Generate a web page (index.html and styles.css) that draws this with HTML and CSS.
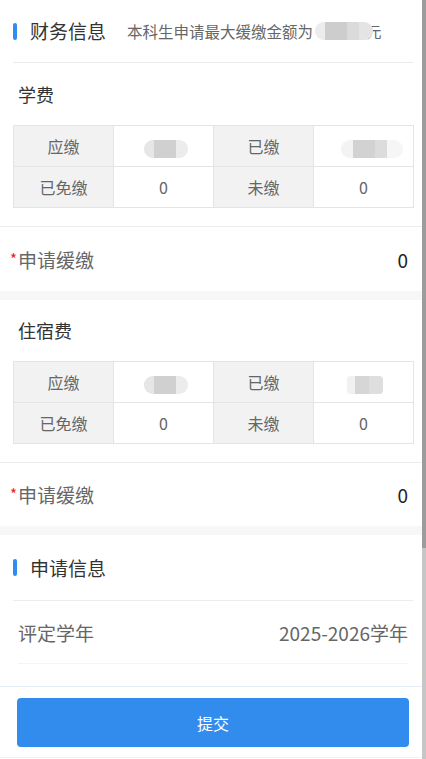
FILE: index.html
```html
<!DOCTYPE html>
<html lang="zh-CN">
<head>
    <meta charset="UTF-8">
    <meta name="viewport" content="width=device-width, initial-scale=1.0">
    <title>缓缴申请</title>
    <link rel="stylesheet" href="styles.css">
</head>
<body>

<div class="page">
    <section class="card">
        <div class="card-head">
            <span class="bar"></span>
            <span class="head-title">财务信息</span>
            <span class="head-note">本科生申请最大缓缴金额为<span class="mosaic mosaic-note"><i></i><i></i><i></i><i></i></span><span class="unit">元</span></span>
        </div>

        <div class="fee">
            <div class="fee-title">学费</div>
            <table class="fee-table">
                <tr>
                    <td class="cell-label">应缴</td>
                    <td><span class="mosaic mosaic-a"><i></i><i></i><i></i></span></td>
                    <td class="cell-label">已缴</td>
                    <td><span class="mosaic mosaic-b"><i></i><i></i><i></i></span></td>
                </tr>
                <tr>
                    <td class="cell-label">已免缴</td>
                    <td>0</td>
                    <td class="cell-label">未缴</td>
                    <td>0</td>
                </tr>
            </table>
        </div>
        <div class="field">
            <span class="req">*</span>
            <span class="field-label">申请缓缴</span>
            <span class="field-value">0</span>
        </div>
    </section>

    <div class="gap"></div>

    <section class="card">
        <div class="fee">
            <div class="fee-title fee-title-alt">住宿费</div>
            <table class="fee-table">
                <tr>
                    <td class="cell-label">应缴</td>
                    <td><span class="mosaic mosaic-a"><i></i><i></i><i></i></span></td>
                    <td class="cell-label">已缴</td>
                    <td><span class="mosaic mosaic-c"><i></i><i></i><i></i></span></td>
                </tr>
                <tr>
                    <td class="cell-label">已免缴</td>
                    <td>0</td>
                    <td class="cell-label">未缴</td>
                    <td>0</td>
                </tr>
            </table>
        </div>
        <div class="field field-alt">
            <span class="req">*</span>
            <span class="field-label">申请缓缴</span>
            <span class="field-value">0</span>
        </div>
    </section>

    <div class="gap"></div>

    <section class="card">
        <div class="card-head card-head-alt">
            <span class="bar"></span>
            <span class="head-title">申请信息</span>
        </div>
        <div class="info-row">
            <span class="info-label">评定学年</span>
            <span class="info-value">2025-2026学年</span>
        </div>
        <div class="spacer"></div>
    </section>

    <div class="footer">
        <button class="submit">提交</button>
    </div>
</div>

<div class="scrollbar"><div class="thumb"></div></div>

</body>
</html>
```

FILE: styles.css
```css
body {
    font-family: "Noto Sans CJK SC", "Noto Sans", sans-serif;
    background-color: #fff;
    color: #333;
    margin: 0;
    overflow: hidden;
}
.page {
    width: 422px;
    background-color: #fff;
}
.card {
    background-color: #fff;
}
.card-head {
    display: flex;
    align-items: center;
    height: 62px;
    margin: 0 9px 0 13px;
    border-bottom: 1px solid #ececec;
}
.card-head-alt {
    height: 65px;
}
.bar {
    width: 4px;
    height: 17px;
    border-radius: 2px;
    background-color: #2f8cf0;
    margin-right: 13px;
}
.head-title {
    font-size: 19px;
    line-height: 24px;
    color: #333;
    margin-right: 21px;
}
.head-note {
    display: flex;
    align-items: center;
    font-size: 15.5px;
    line-height: 20px;
    color: #666;
    white-space: nowrap;
}
.unit {
    margin-left: -7px;
}
.mosaic {
    display: inline-flex;
    position: relative;
    z-index: 1;
    height: 18px;
    border-radius: 9px;
    overflow: hidden;
    background-color: #f1f1f1;
}
.mosaic i {
    display: block;
    height: 100%;
}
.mosaic-note {
    width: 58px;
    margin-left: 2px;
}
.mosaic-note i:nth-child(1) { width: 10px; background-color: #ececec; }
.mosaic-note i:nth-child(2) { width: 22px; background-color: #cdcdcd; }
.mosaic-note i:nth-child(3) { width: 12px; background-color: #dadada; }
.mosaic-note i:nth-child(4) { width: 14px; background-color: #e4e4e4; }
.mosaic-a {
    width: 44px;
    margin-left: 4px;
    vertical-align: middle;
}
.mosaic-a i:nth-child(1) { width: 10px; background-color: #e6e6e6; }
.mosaic-a i:nth-child(2) { width: 22px; background-color: #d0d0d0; }
.mosaic-a i:nth-child(3) { width: 12px; background-color: #ececec; }
.mosaic-b {
    width: 62px;
    margin-left: 16px;
    vertical-align: middle;
    background-color: #f6f6f6;
}
.mosaic-b i:nth-child(1) { width: 12px; background-color: #f3f3f3; }
.mosaic-b i:nth-child(2) { width: 22px; background-color: #d2d2d2; }
.mosaic-b i:nth-child(3) { width: 12px; background-color: #dcdcdc; }
.mosaic-c {
    width: 36px;
    margin-left: 2px;
    vertical-align: middle;
    border-radius: 4px;
    background-color: #f3f3f3;
}
.mosaic-c i:nth-child(1) { width: 8px; background-color: #f1f1f1; }
.mosaic-c i:nth-child(2) { width: 14px; background-color: #d6d6d6; }
.mosaic-c i:nth-child(3) { width: 14px; background-color: #dedede; }

.fee {
    padding-bottom: 18px;
    border-bottom: 1px solid #ececec;
}
.fee-title {
    height: 62px;
    line-height: 62px;
    padding-left: 18px;
    font-size: 18px;
    color: #333;
}
.fee-title-alt {
    height: 61px;
    line-height: 61px;
}
.fee-table {
    border-collapse: collapse;
    margin-left: 13px;
    width: 401px;
    table-layout: fixed;
}
.fee-table td {
    height: 40px;
    padding: 0;
    border: 1px solid #e4e4e4;
    text-align: center;
    font-size: 16px;
    color: #666;
    background-color: #fff;
}
.fee-table td.cell-label {
    background-color: #f2f2f2;
}
.field {
    display: flex;
    align-items: center;
    height: 64px;
    padding: 0 14px 0 10px;
}
.field-alt {
    height: 63px;
}
.req {
    color: #f21818;
    font-size: 15px;
    margin-right: 1px;
    margin-top: -2px;
}
.field-label {
    font-size: 19px;
    color: #666;
    flex-grow: 1;
}
.field-value {
    font-size: 19px;
    color: #222;
}
.gap {
    height: 9px;
    background-color: #f7f7f7;
}
.info-row {
    display: flex;
    justify-content: space-between;
    align-items: center;
    height: 62px;
    margin: 0 14px 0 18px;
    border-bottom: 1px solid #f4f4f4;
    font-size: 19px;
    color: #666;
}
.spacer {
    height: 22px;
}
.footer {
    border-top: 1px solid #e3eef9;
    border-bottom: 1px solid #eef3f8;
    padding: 11px 13px 10px 17px;
}
.submit {
    display: block;
    width: 100%;
    height: 49px;
    border: none;
    border-radius: 4px;
    background-color: #318cee;
    color: #fff;
    font-family: inherit;
    font-size: 16px;
    cursor: pointer;
}
.scrollbar {
    position: fixed;
    top: 0;
    right: 0;
    bottom: 0;
    width: 4px;
    background-color: #c6c6c6;
}
.thumb {
    height: 548px;
    background-color: #9c9c9c;
}
```
